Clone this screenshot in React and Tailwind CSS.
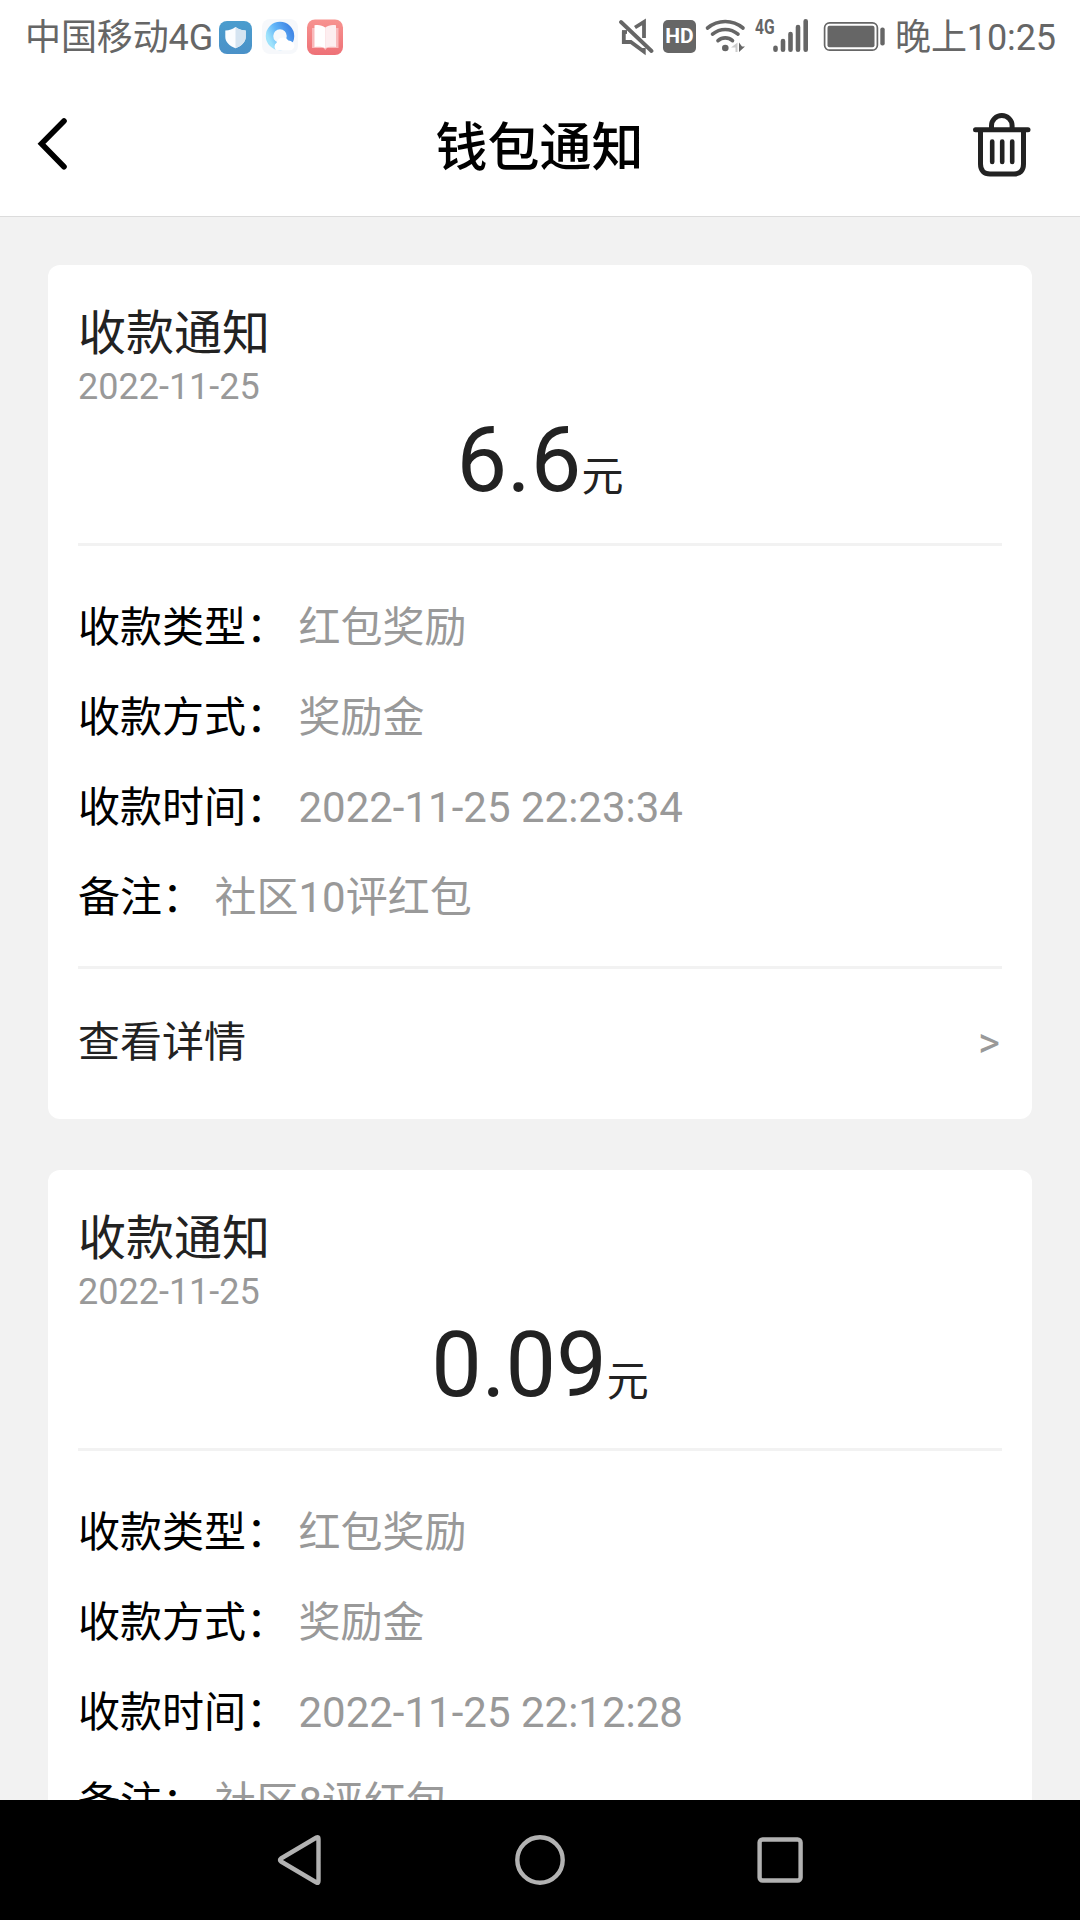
import React from "react";

const notices = [
  { amount: "6.6", time: "2022-11-25 22:23:34", note: "社区10评红包" },
  { amount: "0.09", time: "2022-11-25 22:12:28", note: "社区8评红包" },
];

function ShieldApp() {
  return (
    <svg className="ml-[5px] h-[36px] w-[36px]" viewBox="218 18 36 36">
      <defs>
        <linearGradient id="shieldBg" x1="0" y1="0" x2="0" y2="1">
          <stop offset="0" stopColor="#4b9dce" />
          <stop offset="1" stopColor="#4a91c8" />
        </linearGradient>
      </defs>
      <rect x="219" y="20" width="33" height="33" rx="8" fill="url(#shieldBg)" />
      <path d="M235.500 26c3 2.300 6 3.200 10.200 3.500v6.500c0 5-4 8.800-10.200 11.200C229.300 44.800 225.300 41 225.300 36v-6.500c4.200-.3 7.200-1.200 10.200-3.500z" fill="#fbfdff" />
      <path d="M235.500 26c3 2.300 6 3.200 10.200 3.500v6.500c0 5-4 8.800-10.200 11.200z" fill="#d5e4f1" />
    </svg>
  );
}

function BrowserApp() {
  return (
    <svg className="ml-[7px] h-[38px] w-[38px]" viewBox="261 18 38 38">
      <defs>
        <linearGradient id="ring" x1="0" y1="0.700" x2="1" y2="0.200">
          <stop offset="0" stopColor="#9fe3fb" />
          <stop offset="0.450" stopColor="#62b5f8" />
          <stop offset="1" stopColor="#4288e6" />
        </linearGradient>
      </defs>
      <rect x="262" y="19" width="36" height="35" rx="8" fill="#f6f8fb" />
      <circle cx="280" cy="36" r="10.500" fill="none" stroke="url(#ring)" strokeWidth="7.500" />
      <path d="M276 50.300a5 5 0 0 1 .6-7.600 6.500 6.500 0 0 1 11.800-2.200c3.600.4 6 2.600 6 5.300 0 2.600-2 4.500-4.800 4.500z" fill="#fff" />
    </svg>
  );
}

function BookApp() {
  return (
    <svg className="ml-[7px] h-[38px] w-[38px]" viewBox="306 17 38 38">
      <defs>
        <linearGradient id="bookBg" x1="0" y1="0" x2="0" y2="1">
          <stop offset="0" stopColor="#f79390" />
          <stop offset="1" stopColor="#ee7177" />
        </linearGradient>
      </defs>
      <rect x="307" y="18.500" width="36" height="35.500" rx="8" fill="url(#bookBg)" />
      <path d="M312 27h26.500v20H327l-1.700 2-1.800-2H312z" fill="#f9b9bb" />
      <path d="M314.500 24.300c4 -.8 8 0 10.700 2.200v20.800c-3-1.600-7-1.800-10.700-1.200z" fill="#fff" />
      <path d="M336 24.300c-4 -.8-8 0-10.800 2.200v20.800c3-1.600 7-1.800 10.800-1.200z" fill="#fdeef0" />
    </svg>
  );
}

function StatusIcons() {
  return (
    <div className="flex items-center">
      <svg className="h-[40px] w-[36px]" viewBox="618 17 36 40" fill="none" stroke="#666" strokeWidth="3.800">
        <path d="M623.800 31.500V42h7l13 9.500V48" />
        <path d="M622 32h5" />
        <path d="M635 27.500l9-5.500v16" />
        <path d="M621 22l30.500 29" strokeLinecap="round" />
      </svg>
      <div className="ml-[9px] mt-[-1px] flex h-[33px] w-[33px] items-center justify-center rounded-[5px] bg-[#666] text-[21px] font-bold leading-none text-white">
        HD
      </div>
      <svg className="ml-[8px] h-[40px] w-[42px]" viewBox="704 17 42 40" fill="none" stroke="#666" strokeWidth="3.600" strokeLinecap="round">
        <path d="M707.500 28c10.500-8.600 25-8.600 35.500 0" />
        <path d="M712.500 34.200c7.500-6.300 18-6.300 25.500 0" />
        <path d="M718 40.700c4.300-3.800 10.200-3.800 14.500 0" />
        <circle cx="725.300" cy="48" r="3.300" fill="#666" stroke="none" />
        <path d="M731 47.500l6.500-5v9.500h-2v-4.500z" fill="#ccc" stroke="none" />
        <path d="M739 42.500v9.500l6-5.500h-3z" fill="#666" stroke="none" />
      </svg>
      <div className="ml-[9px] flex h-[40px]">
        <span className="mt-[-1px] w-[18px] origin-left scale-x-[0.78] text-[20px] font-bold leading-[23px] text-[#666]">4G</span>
        <svg className="h-[40px] w-[36px]" viewBox="773 17 36 40" stroke="#666" strokeWidth="4.600" strokeLinecap="round">
          <path d="M775.500 47.700v2M783 41v8.700M790.500 34v15.700M798 27v22.700M805.700 21.300v28.400" />
        </svg>
      </div>
      <svg className="ml-[13px] h-[40px] w-[64px]" viewBox="822 17 64 40">
        <rect x="824.600" y="22.800" width="52.800" height="27.400" rx="5" fill="none" stroke="#666" strokeWidth="1.700" />
        <rect x="827.500" y="25.700" width="47" height="21.600" rx="2" fill="#666" />
        <rect x="880.300" y="27.500" width="4.400" height="18" rx="2" fill="#666" />
      </svg>
    </div>
  );
}

function StatusBar() {
  return (
    <div className="flex h-[74px] items-center justify-between pl-[25px] pr-[24px] text-[36px] leading-none text-[#666]">
      <div className="flex items-center">
        <span className="pt-[2px] tracking-[-0.1px]">中国移动4G</span>
        <ShieldApp />
        <BrowserApp />
        <BookApp />
      </div>
      <div className="flex items-center">
        <StatusIcons />
        <span className="ml-[9px] pt-[2px] tracking-[-0.1px]">晚上10:25</span>
      </div>
    </div>
  );
}

function Header() {
  return (
    <header className="flex h-[143px] items-center justify-between border-b border-[#dcdcdc] pb-[3px] pl-[36px] pr-[47px]">
      <svg className="h-[60px] w-[64px]" viewBox="36 113.500 64 60" fill="none" stroke="#000" strokeWidth="5.600" strokeLinecap="round">
        <path d="M64 120.500L41.500 143.300L64 166.200" />
      </svg>
      <h1 className="ml-[8px] pt-[10px] text-[52px] font-medium leading-none text-black">钱包通知</h1>
      <svg className="h-[66px] w-[62px]" viewBox="972 110.500 62 66" fill="none" stroke="#222" strokeWidth="5" strokeLinecap="round">
        <path d="M976.500 129.300h52.500" />
        <path d="M992.500 128v-3a10.300 10 0 0 1 20.600 0v3" />
        <path d="M981.500 130v33.500c0 6.500 3.500 10 9.500 10h24c6 0 9.500-3.500 9.500-10V130" />
        <path d="M993.200 141v20.500M1003.200 141v20.500M1013.200 141v20.500" strokeWidth="4.600" />
      </svg>
    </header>
  );
}

function Row({ label, value }) {
  return (
    <div className="flex h-[90px] items-center whitespace-pre leading-none">
      <span className="text-black">{label}：</span>
      <span className="text-[#999]"> {value}</span>
    </div>
  );
}

function Card({ notice }) {
  return (
    <section className="h-[854px] shrink-0 rounded-[12px] bg-white px-[30px] text-[42px] text-[#222]">
      <div className="h-[278px] pt-[41px]">
        <h2 className="text-[48px] leading-[56px]">收款通知</h2>
        <p className="text-[36px] leading-[50px] text-[#999]">2022-11-25</p>
        <div className="flex items-baseline justify-center pt-px leading-[96px]">
          <span className="text-[90px]">{notice.amount}</span>
          <span>元</span>
        </div>
      </div>
      <div className="h-[3px] bg-[#f2f2f2]" />
      <div className="h-[420px] pt-[37px]">
        <Row label="收款类型" value="红包奖励" />
        <Row label="收款方式" value="奖励金" />
        <Row label="收款时间" value={notice.time} />
        <Row label="备注" value={notice.note} />
      </div>
      <div className="h-[3px] bg-[#f2f2f2]" />
      <div className="flex h-[148px] items-center justify-between pr-[2px] leading-none">
        <span>查看详情</span>
        <span className="text-[#999]">&gt;</span>
      </div>
    </section>
  );
}

function NavBar() {
  return (
    <nav className="flex h-[120px] shrink-0 items-center justify-center gap-[180px] bg-black">
      {[
        <path key="back" d="M46.500 5.500Q48.500 4.500 48.500 7V49Q48.500 51.500 46.500 50.500L11 29.500Q9 28 11 26.500Z" />,
        <circle key="home" cx="30" cy="28" r="22.700" />,
        <rect key="recent" x="9.600" y="7.500" width="41" height="41" rx="3" />,
      ].map((shape) => (
        <svg key={shape.key} className="h-[56px] w-[60px] overflow-visible" viewBox="0 0 60 56" fill="none" stroke="#b2b2b2" strokeWidth="4.400" strokeLinejoin="round">
          {shape}
        </svg>
      ))}
    </nav>
  );
}

export default function App() {
  return (
    <div className="flex h-[1920px] w-[1080px] flex-col overflow-hidden bg-white font-['Roboto','Noto_Sans_CJK_SC',sans-serif]">
      <StatusBar />
      <Header />
      <main className="flex min-h-0 flex-1 flex-col gap-[51px] overflow-hidden bg-[#f2f2f2] px-[48px] pt-[48px]">
        {notices.map((notice) => (
          <Card key={notice.time} notice={notice} />
        ))}
      </main>
      <NavBar />
    </div>
  );
}
